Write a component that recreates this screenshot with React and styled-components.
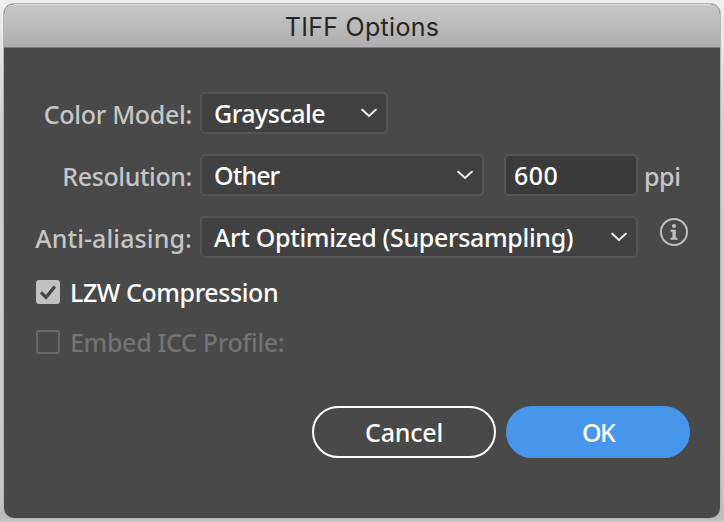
import React from "react";
import styled, { createGlobalStyle } from "styled-components";

const GlobalStyle = createGlobalStyle`
  * { box-sizing: border-box; }
  body {
    margin: 0;
    background: linear-gradient(#f0f0f0 0, #e6e6e6 40px, #cfcfcf 130px, #c8c8c8 480px, #bcbcbc 518px, #cacaca 522px);
    font-family: "Noto Sans", "Open Sans", sans-serif;
  }
`;

const Desktop = styled.div`
  height: 522px;
  padding: 4px 4px 4px;
`;

const Dialog = styled.section`
  height: 514px;
  display: flex;
  flex-direction: column;
  border-radius: 10px;
  overflow: hidden;
  background: #494949;
  box-shadow: 0 0 0 1px #b4b4b4;
`;

const TitleBar = styled.header`
  height: 44px;
  flex: none;
  display: flex;
  justify-content: center;
  padding-top: 7px;
  border-top: 1px solid #dedede;
  border-bottom: 1px solid #797979;
  border-radius: 10px 10px 0 0;
  background: linear-gradient(#c8c8c8, #adadad);
`;

const Title = styled.h1`
  margin: 0;
  font: 400 25px/30px Inter, sans-serif;
  letter-spacing: 0.3px;
  color: #262626;
`;

const Form = styled.form`
  flex: 1;
  display: flex;
  flex-direction: column;
  padding: 44px 30px 60px 32px;
`;

const Fields = styled.div`
  display: grid;
  grid-template-columns: 156px 1fr;
  grid-auto-rows: 42px;
  column-gap: 8px;
  row-gap: 20px;
`;

const Label = styled.label`
  justify-self: end;
  font-size: 25px;
  line-height: 44px;
  font-weight: 500;
  letter-spacing: ${(p) => p.$tracking}px;
  white-space: nowrap;
  color: #c6c6c6;
`;

const Controls = styled.div`
  display: flex;
  height: 42px;
`;

const Field = styled.div`
  flex: none;
  display: flex;
  align-items: center;
  justify-content: space-between;
  width: ${(p) => p.$width}px;
  height: 42px;
  padding: 0 8px 0 ${(p) => (p.$input ? 8 : 12)}px;
  margin-left: ${(p) => (p.$input ? 20 : 0)}px;
  border: 2px solid #545454;
  border-radius: 5px;
  background: ${(p) => (p.$input ? "#3b3b3b" : "#414141")};
`;

const Value = styled.span`
  font-size: 25px;
  line-height: 38px;
  font-weight: 500;
  letter-spacing: ${(p) => p.$tracking || 0}px;
  white-space: nowrap;
  color: #fff;
`;

const Unit = styled(Value)`
  margin-left: 6px;
  line-height: 44px;
  color: #c6c6c6;
`;

const ChevronIcon = styled.svg`
  flex: none;
  width: 18px;
  height: 12px;
  fill: none;
  stroke: #f4f4f4;
  stroke-width: 2;
`;

const InfoIcon = styled.svg`
  flex: none;
  width: 28px;
  height: 28px;
  margin: 2px 0 0 22px;
`;

const Checks = styled.div`
  display: grid;
  row-gap: 16px;
  margin-top: 17px;
`;

const CheckRow = styled.div`
  display: flex;
  align-items: center;
  gap: 10px;
  height: 34px;
`;

const CheckBox = styled.span`
  display: flex;
  width: 24px;
  height: 24px;
  border: 2px solid ${(p) => (p.$checked ? "#c1c1c1" : "#666")};
  border-radius: 3px;
  background: ${(p) => (p.$checked ? "#c1c1c1" : "transparent")};
`;

const CheckMark = styled.svg`
  width: 20px;
  height: 20px;
  fill: none;
  stroke: #444;
  stroke-width: 3.2;
`;

const CheckLabel = styled(Value)`
  color: ${(p) => (p.$disabled ? "#737373" : "#fff")};
`;

const Actions = styled.footer`
  display: flex;
  justify-content: flex-end;
  gap: 10px;
  margin-top: auto;
`;

const Button = styled.button`
  width: 184px;
  height: 52px;
  padding: 0;
  border: 2px solid ${(p) => (p.$primary ? "#4896ec" : "#fff")};
  border-radius: 26px;
  background: ${(p) => (p.$primary ? "#4896ec" : "transparent")};
  font: inherit;
`;

const Chevron = () => (
  <ChevronIcon viewBox="0 0 18 12" strokeLinecap="round" strokeLinejoin="miter">
    <path d="M2.2 2.7 9 8.9 15.8 2.7" />
  </ChevronIcon>
);

const Select = ({ width, tracking, children }) => (
  <Field $width={width}>
    <Value $tracking={tracking}>{children}</Value>
    <Chevron />
  </Field>
);

export default function App() {
  return (
    <>
      <GlobalStyle />
      <Desktop>
        <Dialog>
          <TitleBar>
            <Title>TIFF Options</Title>
          </TitleBar>
          <Form>
            <Fields>
              <Label $tracking={-0.3}>Color Model:</Label>
              <Controls>
                <Select width={188} tracking={-0.5}>Grayscale</Select>
              </Controls>
              <Label $tracking={-0.4}>Resolution:</Label>
              <Controls>
                <Select width={284} tracking={-0.9}>Other</Select>
                <Field $width={134} $input>
                  <Value $tracking={0.4}>600</Value>
                </Field>
                <Unit $tracking={-0.4}>ppi</Unit>
              </Controls>
              <Label $tracking={0.1}>Anti-aliasing:</Label>
              <Controls>
                <Select width={438} tracking={-0.33}>Art Optimized (Supersampling)</Select>
                <InfoIcon viewBox="0 0 28 28">
                  <circle cx="14" cy="14" r="13" fill="none" stroke="#c0c0c0" strokeWidth="2" />
                  <circle cx="14" cy="8" r="2.1" fill="#c0c0c0" />
                  <path d="M10.6 11.7h5.2v8.1h1.7v2h-7v-2h1.9v-6.1h-1.8z" fill="#c0c0c0" />
                </InfoIcon>
              </Controls>
            </Fields>
            <Checks>
              <CheckRow>
                <CheckBox $checked>
                  <CheckMark viewBox="0 0 20 20">
                    <path d="M3 10.4 8 15.4 16.8 4.6" />
                  </CheckMark>
                </CheckBox>
                <CheckLabel $tracking={-0.42}>LZW Compression</CheckLabel>
              </CheckRow>
              <CheckRow>
                <CheckBox />
                <CheckLabel $disabled $tracking={-0.33}>Embed ICC Profile:</CheckLabel>
              </CheckRow>
            </Checks>
            <Actions>
              <Button type="button">
                <Value $tracking={-0.2}>Cancel</Value>
              </Button>
              <Button type="button" $primary>
                <Value $tracking={-1.6}>OK</Value>
              </Button>
            </Actions>
          </Form>
        </Dialog>
      </Desktop>
    </>
  );
}
